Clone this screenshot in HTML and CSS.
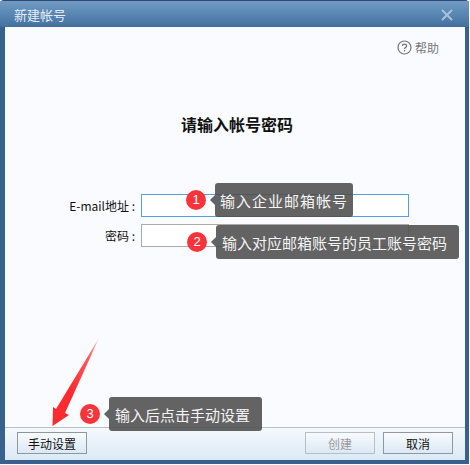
FILE: index.html
```html
<!DOCTYPE html>
<html>
<head>
    <title>新建帐号</title>
    <link rel="stylesheet" href="styles.css">
</head>
<body>
    <div class="window">
        <div class="titlebar">
            <div class="title">新建帐号</div>
            <svg class="close" width="12" height="12" viewBox="0 0 12 12">
                <path d="M1 1L11 11M11 1L1 11" stroke="#a9c2dc" stroke-width="2" fill="none"/>
            </svg>
        </div>

        <div class="content">
            <div class="help">
                <svg width="15" height="15" viewBox="0 0 15 15">
                    <circle cx="7.5" cy="7.5" r="6.5" stroke="#777" stroke-width="1.2" fill="none"/>
                    <path d="M5.4 6C5.4 3.6 9.6 3.6 9.6 6C9.6 7.4 7.5 7.4 7.5 9" stroke="#777" stroke-width="1.3" fill="none"/>
                    <rect x="6.8" y="10" width="1.4" height="1.4" fill="#777"/>
                </svg>
                <span>帮助</span>
            </div>

            <h1 class="heading">请输入帐号密码</h1>

            <div class="form">
                <div class="form-row">
                    <label class="form-label">E-mail地址 :</label>
                    <input class="form-input focused" type="text">
                </div>
                <div class="form-row">
                    <label class="form-label">密码 :</label>
                    <input class="form-input" type="password">
                </div>
            </div>
        </div>

        <div class="footer">
            <button class="btn">手动设置</button>
            <div class="footer-right">
                <button class="btn" disabled>创建</button>
                <button class="btn">取消</button>
            </div>
        </div>

        <!-- annotations on top of the dialog -->
        <div class="badge badge-1">1</div>
        <div class="tip tip-1">输入企业邮箱帐号</div>
        <div class="badge badge-2">2</div>
        <div class="tip tip-2">输入对应邮箱账号的员工账号密码</div>
        <div class="badge badge-3">3</div>
        <div class="tip tip-3">输入后点击手动设置</div>

        <svg class="arrow" width="60" height="100" viewBox="0 0 60 100">
            <defs>
                <linearGradient id="arrowFill" x1="1" y1="0" x2="0" y2="1">
                    <stop offset="0" stop-color="#ffd0d0"/>
                    <stop offset="0.2" stop-color="#ff5c5c"/>
                    <stop offset="0.6" stop-color="#fb2b2f"/>
                </linearGradient>
            </defs>
            <path d="M50 1L16 76L20 78L3.5 89L4 70L7 72Z" fill="url(#arrowFill)"/>
        </svg>
    </div>
</body>
</html>
```

FILE: styles.css
```css
* {
    box-sizing: border-box;
}
body {
    margin: 0;
    background: #fff;
    font-family: "Noto Sans CJK SC", "Liberation Sans", sans-serif;
}
.window {
    position: relative;
    width: 469px;
    height: 464px;
    display: flex;
    flex-direction: column;
    padding: 0 4px 4px 5px;
    background: #38618e;
    border-radius: 4px 4px 0 0;
    border-top: 1px solid #2f4a6b;
}
.titlebar {
    height: 26px;
    margin: 0 -4px 0 -5px;
    padding: 0 16px 0 14px;
    display: flex;
    align-items: center;
    justify-content: space-between;
    background: linear-gradient(#709bc5, #43719f);
}
.title {
    font-size: 13px;
    color: #e4edf6;
}
.close {
    margin-top: 1px;
}
.content {
    flex-grow: 1;
    padding: 12px 26px 0 0;
    background: #f9fbfe;
}
.help {
    display: flex;
    justify-content: flex-end;
    align-items: center;
    gap: 3px;
    font-size: 12px;
    color: #777;
}
.heading {
    margin: 56px 0 0 4px;
    font-size: 16px;
    font-weight: bold;
    line-height: 24px;
    padding-left: 26px;
    text-align: center;
    color: #111;
}
.form {
    margin-top: 58px;
    display: flex;
    flex-direction: column;
    gap: 7px;
}
.form-row {
    display: flex;
    align-items: center;
}
.form-label {
    width: 136px;
    padding-right: 6px;
    font-size: 12px;
    text-align: right;
    color: #111;
}
.form-input {
    width: 268px;
    height: 23px;
    padding: 0;
    background: #fff;
    border: 1px solid #aaa;
}
.form-input.focused {
    border-color: #5a9ddf;
}
.footer {
    height: 33px;
    padding: 4px 12px 0 12px;
    display: flex;
    align-items: flex-start;
    justify-content: space-between;
    background: linear-gradient(#f5f9fd, #dce9f5);
    border-top: 1px solid #b9c2cb;
}
.footer-right {
    display: flex;
    gap: 8px;
}
.btn {
    width: 70px;
    height: 22px;
    padding: 0;
    font-family: inherit;
    font-size: 12px;
    color: #111;
    background: linear-gradient(#f9fbfd, #dbe8f4);
    border: 1px solid #8f98a2;
}
.btn:disabled {
    color: #9a9a9a;
    border-color: #b6bfc8;
}
.badge {
    position: absolute;
    width: 20px;
    height: 20px;
    border-radius: 50%;
    background: #f8333a;
    color: #fff;
    font-family: "Liberation Sans", sans-serif;
    font-size: 13px;
    line-height: 20px;
    text-align: center;
}
.badge-1 {
    left: 186px;
    top: 189px;
}
.badge-2 {
    left: 187px;
    top: 231px;
}
.badge-3 {
    left: 80px;
    top: 403px;
}
.tip {
    position: absolute;
    height: 34px;
    padding: 0 6px;
    display: flex;
    align-items: center;
    white-space: nowrap;
    font-size: 15px;
    color: #f4f4f4;
    background: rgba(77, 77, 77, 0.88);
    border-radius: 3px;
}
.tip:before {
    content: "";
    position: absolute;
    left: -5px;
    top: 12px;
    border-top: 5px solid transparent;
    border-bottom: 5px solid transparent;
    border-right: 5px solid rgba(77, 77, 77, 0.88);
}
.tip-1 {
    left: 215px;
    top: 182px;
    width: 138px;
    padding-left: 5px;
    letter-spacing: 1px;
}
.tip-2 {
    left: 216px;
    top: 224px;
    width: 243px;
}
.tip-3 {
    left: 109px;
    top: 396px;
    width: 153px;
}
.arrow {
    position: absolute;
    left: 49px;
    top: 336px;
}
```
